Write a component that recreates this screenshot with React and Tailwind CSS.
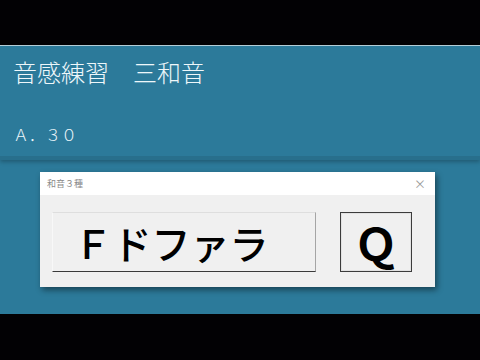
export default function App() {
  const jp = { fontFamily: '"Noto Sans CJK JP", "Noto Sans", sans-serif' };
  return (
    <div className="w-[480px] h-[360px] bg-black flex flex-col overflow-hidden" style={jp}>
      <div className="h-[45px] bg-[#020104]" />
      <div className="h-px bg-[#b9d3de]" />
      <div className="h-[268px] bg-[#2c7a9a] flex flex-col">
        <header className="h-[114px] shrink-0 pl-[13px] pt-[14px] border-b-4 border-[#286f8c] shadow-[0_2px_4px_rgba(0,0,0,0.25)] text-[#eef7fa]">
          <h1 className="text-[24px] leading-none font-light">音感練習　三和音</h1>
          <p className="mt-[42px] text-[16px] leading-none font-light">Ａ．３０</p>
        </header>
        <div className="ml-[40px] mt-[12px] w-[395px] h-[115px] bg-[#f0f0f0] shadow-[2px_3px_6px_rgba(0,0,0,0.45)] flex flex-col">
          <div className="h-[23px] bg-white flex items-center justify-between pl-[7px] pr-[9px]">
            <span className="text-[9px] text-[#8a8a8a]">和音３種</span>
            <span className="text-[12px] text-[#9a9a9a] leading-none">×</span>
          </div>
          <div className="flex pl-[12px] pt-[17px] gap-[24px]">
            <button className="w-[264px] h-[60px] pr-[26px] bg-[#f0f0f0] border-t border-l border-t-[#dedede] border-l-[#f8f8f8] border-b border-b-[#3a3a3a] border-r border-r-[#a5a5a5] flex items-center justify-center text-[39px] leading-none font-medium text-black">
              Ｆドファラ
            </button>
            <button className="w-[72px] h-[60px] bg-[#f0f0f0] border border-[#3c3c3c] flex items-center justify-center text-[44px] leading-none font-bold text-black">
              <span className="w-full h-full border border-[#e2e2e2] flex items-center justify-center">Ｑ</span>
            </button>
          </div>
        </div>
      </div>
      <div className="flex-1 bg-[#020104]" />
    </div>
  );
}
